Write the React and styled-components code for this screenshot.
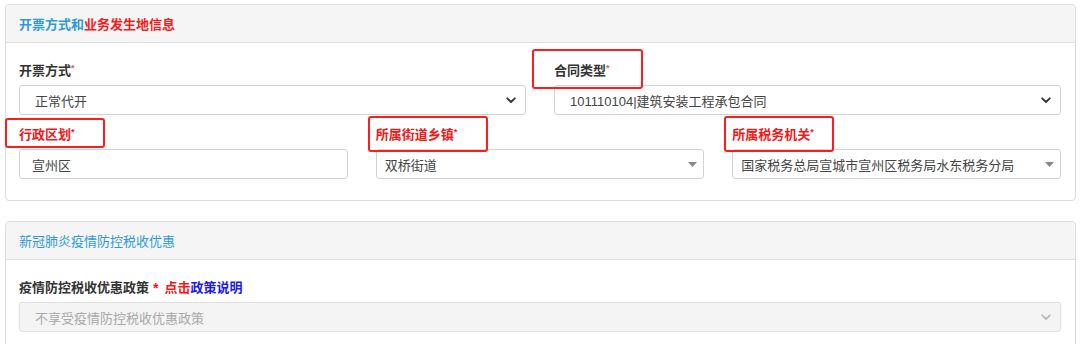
import React from "react";
import styled, { createGlobalStyle } from "styled-components";

const Global = createGlobalStyle`
  html, body { margin: 0; padding: 0; background: #fff; }
  body {
    font-family: "Liberation Sans", "Noto Sans CJK SC", sans-serif;
    font-size: 13px;
    color: #333;
  }
`;

const Page = styled.div`
  padding: 4px 4px 0 5px;
  width: 1080px;
  box-sizing: border-box;
  height: 344px;
  overflow: hidden;
`;

const Panel = styled.section`
  border: 1px solid #dcdcdc;
  border-radius: 4px;
  margin-bottom: 20px;
  background: #fff;
`;

const PanelHeader = styled.div`
  height: 37px;
  display: flex;
  align-items: center;
  padding: 0 14px 0 13px;
  background: #f5f5f5;
  border-bottom: 1px solid #dedede;
  border-radius: 4px 4px 0 0;
  font-size: 13px;
  font-weight: ${(p) => (p.$bold ? 700 : 400)};
  color: #2f9ad8;
`;

const Red = styled.span`
  color: #f51b1b;
`;

const PanelBody = styled.div`
  padding: 19px 14px 21px 13px;
  display: flex;
  flex-direction: column;
  gap: 11px;
`;

const Row = styled.div`
  display: grid;
  grid-template-columns: repeat(${(p) => p.$cols}, 1fr);
  column-gap: 28px;
`;

const Field = styled.div`
  display: flex;
  flex-direction: column;
  gap: 5px;
`;

const LabelWrap = styled.div`
  position: relative;
  height: 18px;
  line-height: 18px;
  display: flex;
  align-items: center;
`;

const LabelText = styled.span`
  font-weight: 700;
  font-size: 13px;
  color: ${(p) => (p.$red ? "#f01818" : "#333")};
`;

const Star = styled.sup`
  color: ${(p) => (p.$strong ? "#f01818" : "#e85a5a")};
  font-size: 9px;
  font-weight: 700;
  vertical-align: top;
  line-height: 12px;
`;

const BigStar = styled.span`
  color: #f01818;
  font-weight: 700;
  font-size: 14px;
  margin: 0 6px 0 4px;
`;

const LinkRed = styled.span`
  color: #f01818;
  font-weight: 700;
`;

const LinkBlue = styled.span`
  color: #1a1aee;
  font-weight: 700;
`;

const Highlight = styled.div`
  position: absolute;
  left: ${(p) => p.$l}px;
  top: ${(p) => p.$t}px;
  width: ${(p) => p.$w}px;
  height: ${(p) => p.$h}px;
  border: 2px solid #ff1c1c;
  border-radius: 3px;
  box-sizing: border-box;
  pointer-events: none;
`;

const Control = styled.div`
  height: 30px;
  box-sizing: border-box;
  border: 1px solid ${(p) => (p.$disabled ? "#e0e0e0" : "#d2d2d2")};
  border-radius: 3px;
  background: ${(p) => (p.$disabled ? "#f4f4f4" : "#fff")};
  display: flex;
  align-items: center;
  justify-content: space-between;
  padding: 0 ${(p) => p.$pr}px 0 ${(p) => p.$pl}px;
  color: ${(p) => (p.$disabled ? "#a8a8a8" : "#444")};
  font-size: 13px;
  white-space: nowrap;
  overflow: hidden;
`;

const Chevron = ({ light }) => (
  <svg width="10" height="7" viewBox="0 0 10 7">
    <path
      d="M1.2 1.3 L5 5 L8.8 1.3"
      fill="none"
      stroke={light ? "#b8b8b8" : "#333"}
      strokeWidth="1.8"
      strokeLinecap="round"
      strokeLinejoin="round"
    />
  </svg>
);

const Caret = () => (
  <svg width="9" height="5" viewBox="0 0 9 5">
    <path d="M0 0 H9 L4.5 5 Z" fill="#888" />
  </svg>
);

const NativeSelect = ({ children, disabled }) => (
  <Control $pl={15} $pr={9} $disabled={disabled}>
    <span>{children}</span>
    <Chevron light={disabled} />
  </Control>
);

const Select2 = ({ children }) => (
  <Control $pl={8} $pr={6}>
    <span>{children}</span>
    <Caret />
  </Control>
);

const Input = ({ children }) => (
  <Control $pl={12} $pr={8}>
    <span>{children}</span>
  </Control>
);

export default function App() {
  return (
    <>
      <Global />
      <Page>
        <Panel>
          <PanelHeader $bold>
            开票方式和<Red>业务发生地信息</Red>
          </PanelHeader>
          <PanelBody>
            <Row $cols={2}>
              <Field>
                <LabelWrap>
                  <LabelText>
                    开票方式<Star>*</Star>
                  </LabelText>
                </LabelWrap>
                <NativeSelect>正常代开</NativeSelect>
              </Field>
              <Field>
                <LabelWrap>
                  <LabelText>
                    合同类型<Star>*</Star>
                  </LabelText>
                  <Highlight $l={-22} $t={-13} $w={111} $h={40} />
                </LabelWrap>
                <NativeSelect>101110104|建筑安装工程承包合同</NativeSelect>
              </Field>
            </Row>
            <Row $cols={3}>
              <Field>
                <LabelWrap>
                  <LabelText $red>
                    行政区划<Star $strong>*</Star>
                  </LabelText>
                  <Highlight $l={-14} $t={-8} $w={100} $h={30} />
                </LabelWrap>
                <Input>宣州区</Input>
              </Field>
              <Field>
                <LabelWrap>
                  <LabelText $red>
                    所属街道乡镇<Star $strong>*</Star>
                  </LabelText>
                  <Highlight $l={-8} $t={-10} $w={120} $h={36} />
                </LabelWrap>
                <Select2>双桥街道</Select2>
              </Field>
              <Field>
                <LabelWrap>
                  <LabelText $red>
                    所属税务机关<Star $strong>*</Star>
                  </LabelText>
                  <Highlight $l={-8} $t={-10} $w={110} $h={36} />
                </LabelWrap>
                <Select2>国家税务总局宣城市宣州区税务局水东税务分局</Select2>
              </Field>
            </Row>
          </PanelBody>
        </Panel>
        <Panel>
          <PanelHeader>新冠肺炎疫情防控税收优惠</PanelHeader>
          <PanelBody>
            <Row $cols={1}>
              <Field>
                <LabelWrap>
                  <LabelText>疫情防控税收优惠政策</LabelText>
                  <BigStar>*</BigStar>
                  <LinkRed>点击</LinkRed>
                  <LinkBlue>政策说明</LinkBlue>
                </LabelWrap>
                <NativeSelect disabled>不享受疫情防控税收优惠政策</NativeSelect>
              </Field>
            </Row>
          </PanelBody>
        </Panel>
      </Page>
    </>
  );
}
